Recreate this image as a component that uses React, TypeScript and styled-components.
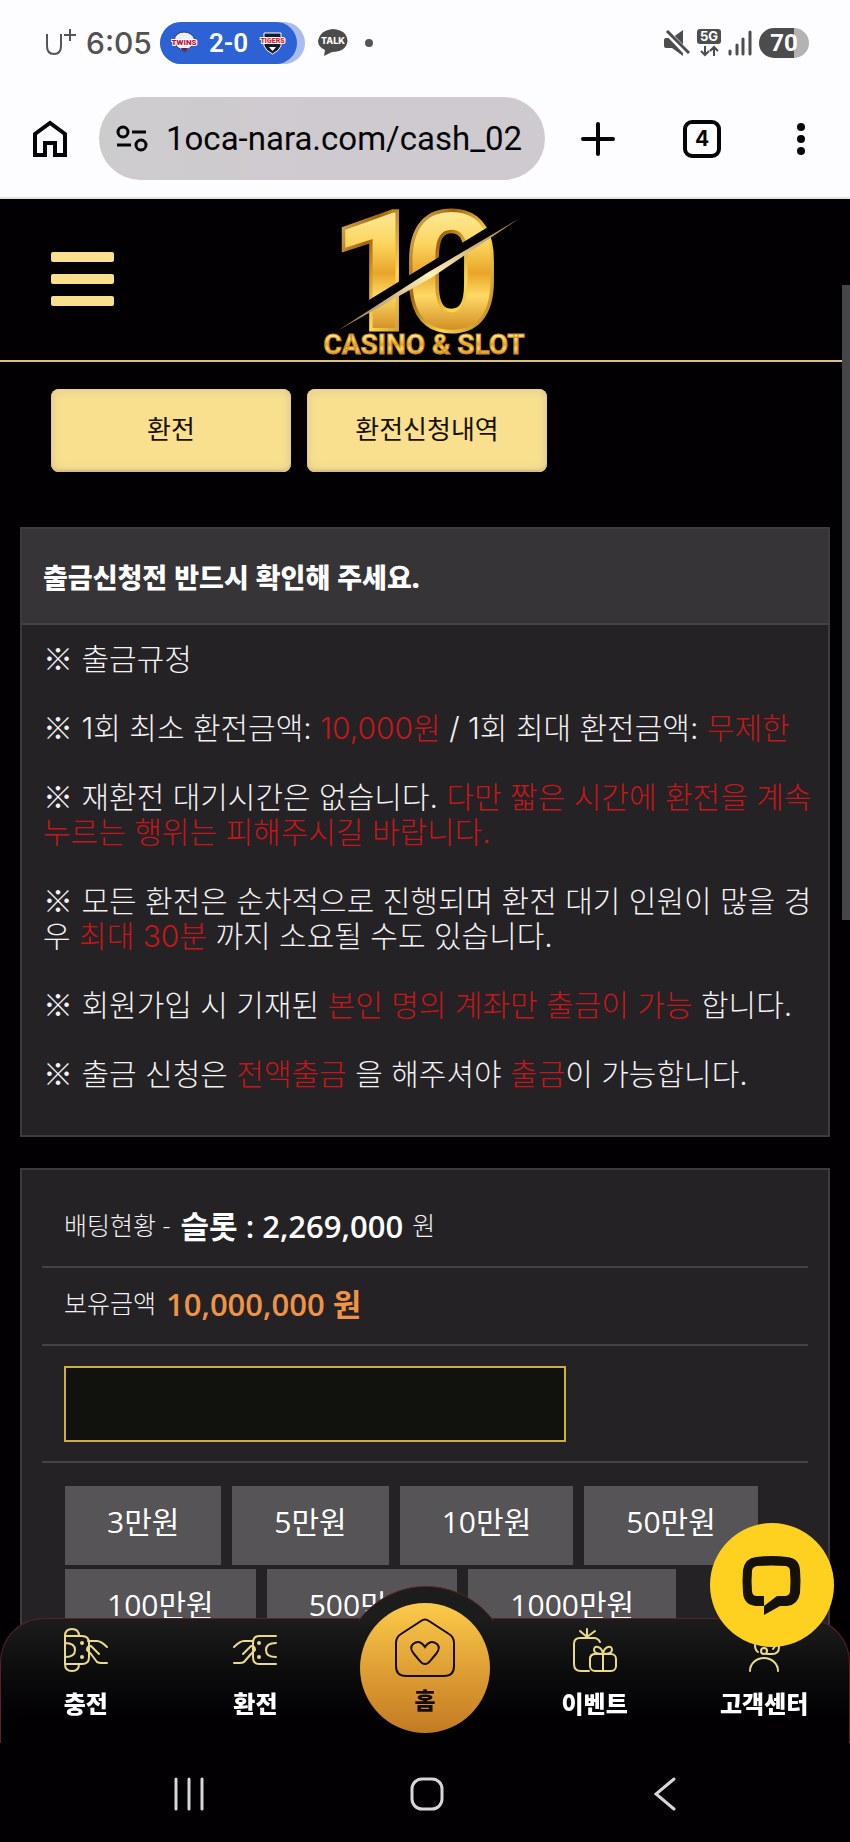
import React from "react";
import styled, { createGlobalStyle } from "styled-components";

const GlobalStyle = createGlobalStyle`
  * { box-sizing: border-box; }
  body {
    margin: 0;
    background: #020003;
    font-family: "Noto Sans CJK KR", "Noto Sans", sans-serif;
  }
  button, input { font-family: inherit; border: 0; margin: 0; padding: 0; background: none; color: inherit; }
  a { color: inherit; text-decoration: none; }
  svg { display: block; }
`;

const latin = `"Roboto", "Noto Sans", sans-serif`;

/* ---------- phone status bar ---------- */
const Page = styled.div`
  min-height: 100vh;
  overflow: hidden;
`;

const Chrome = styled.div`
  background: #fdfcff;
  border-bottom: 2px solid #e4e2e8;
  color: #050507;
`;

const StatusBar = styled.div`
  display: flex;
  align-items: center;
  height: 86px;
  padding: 0 41px 0 44px;
  color: #525252;
  font-family: "Inter", ${latin};
`;

const Carrier = styled.span`
  display: flex;
  align-items: center;
  width: 42px;
`;

const Clock = styled.span`
  width: 74px;
  font-size: 30px;
  font-weight: 500;
`;

const ScoreShadow = styled.span`
  width: 145px;
  border-radius: 21px;
  background: #a9bcf2;
`;

const ScorePill = styled.span`
  display: flex;
  align-items: center;
  justify-content: space-between;
  width: 137px;
  height: 42px;
  padding: 0 11px;
  border-radius: 21px;
  background: #2c62d4;
  color: #fff;
  font-family: ${latin};
  font-size: 26px;
  font-weight: 600;
`;

const TalkIcon = styled.svg`
  margin-left: 13px;
`;

const Dot = styled.span`
  width: 8px;
  height: 8px;
  margin-left: 17px;
  border-radius: 50%;
  background: #555;
`;

const StatusRight = styled.span`
  display: flex;
  align-items: center;
  gap: 7px;
  margin-left: auto;
`;

const Battery = styled.span`
  display: flex;
  align-items: center;
  justify-content: center;
  width: 50px;
  height: 30px;
  border-radius: 15px;
  background: linear-gradient(90deg, #4c4c4c 70%, #b3b3b3 70%);
  color: #fff;
  font-family: ${latin};
  font-size: 24px;
  font-weight: 700;
`;

/* ---------- browser tool bar ---------- */
const ToolBar = styled.div`
  display: flex;
  align-items: center;
  height: 111px;
  padding: 0 43px 6px 32px;
`;

const IconButton = styled.button`
  display: flex;
  align-items: center;
  justify-content: center;
  cursor: pointer;
`;

const AddressBox = styled.label`
  display: flex;
  flex: 1;
  align-items: center;
  gap: 18px;
  min-width: 0;
  height: 83px;
  margin: 0 36px 0 31px;
  padding-left: 17px;
  border-radius: 42px;
  background: linear-gradient(90deg, #cdcccd, #cfcad0 50%);
`;

const AddressInput = styled.input`
  flex: 1;
  width: 0;
  height: 48px;
  outline: none;
  font-family: ${latin};
  font-size: 33px;
`;

const ToolGroup = styled.div`
  display: flex;
  align-items: center;
  gap: 68px;
`;

const TabCount = styled(IconButton)`
  width: 38px;
  height: 38px;
  border: 4px solid #050507;
  border-radius: 9px;
  font-family: "Inter", ${latin};
  font-size: 21px;
  font-weight: 700;
`;

const MenuDots = styled(IconButton)`
  width: 12px;
  margin-left: 6px;
`;

/* ---------- site header ---------- */
const Header = styled.header`
  display: grid;
  grid-template-columns: 1fr auto 1fr;
  align-items: start;
  height: 163px;
  padding: 0 51px;
  border-bottom: 2px solid #dcc07c;
`;

const Burger = styled.button`
  display: flex;
  flex-direction: column;
  gap: 12px;
  width: 63px;
  margin-top: 53px;
  cursor: pointer;
`;

const BurgerLine = styled.span`
  width: 100%;
  height: 10px;
  border-radius: 2px;
  background: #f8e08d;
`;

const LogoArt = styled.svg`
  overflow: visible;
`;

const Tabs = styled.nav`
  display: flex;
  gap: 16px;
  padding: 27px 51px 55px;
`;

const TabButton = styled.button`
  width: 240px;
  height: 83px;
  padding-bottom: 6px;
  border-radius: 8px;
  background: #f8e08f;
  box-shadow: inset 0 0 8px 2px #e3cb93, inset 0 -2px 2px #b9a56c;
  color: #1a1008;
  font-size: 26px;
  cursor: pointer;
`;

/* ---------- cards ---------- */
const Card = styled.section`
  margin: 0 20px 31px;
  border: 2px solid #3d3b3d;
  background: #242224;
  color: #f4f2f4;
  font-family: "Open Sans", "Noto Sans CJK KR", sans-serif;
`;

const CardTitle = styled.h2`
  margin: 0;
  padding: 31px 21px 27px;
  border-bottom: 2px solid #444244;
  background: #363436;
  color: #fff;
  font-size: 27px;
  font-weight: 900;
  line-height: 36px;
`;

const Rules = styled.div`
  display: flex;
  flex-direction: column;
  gap: 34px;
  padding: 17px 0 43px 21px;
  font-family: "Inter", "Noto Sans CJK KR", sans-serif;
  font-size: 30px;
  font-weight: 300;
  line-height: 35px;
  white-space: nowrap;
`;

const RuleText = styled.p`
  margin: 0;
`;

const RuleMark = styled.span`
  font-family: "Noto Sans CJK KR", sans-serif;
  line-height: 1;
`;

const Red = styled.span`
  color: #c4171b;
`;

const FormCard = styled(Card)`
  padding: 20px 20px 180px;
`;

const Row = styled.div<{ $height: number }>`
  display: flex;
  align-items: center;
  height: ${(p) => p.$height}px;
  padding: 0 22px;
  border-bottom: 2px solid #444244;
`;

const TextRow = styled(Row)`
  padding-bottom: 8px;
`;

const Label = styled.span`
  font-size: 25px;
  font-weight: 300;
  white-space: pre;
`;

const Amount = styled.span<{ $accent?: boolean }>`
  margin: 0 9px 0 10px;
  color: ${(p) => (p.$accent ? "#ef9447" : "#fff")};
  font-size: 31px;
  font-weight: 600;
`;

const AmountInput = styled.input`
  width: 502px;
  height: 76px;
  padding: 0 16px;
  border: 2px solid #cdb13c;
  background: #11120d;
  color: #fff;
  font-size: 30px;
  outline: none;
`;

const Chips = styled.div`
  display: flex;
  flex-wrap: wrap;
  gap: 4px 11px;
  padding: 23px 23px 0;
`;

const Chip = styled.button`
  height: 79px;
  padding: 0 42px 12px;
  background: #565456;
  color: #fff;
  font-size: 30px;
  cursor: pointer;
`;

/* ---------- layers over the page ---------- */
const ScrollThumb = styled.div`
  position: fixed;
  top: 285px;
  right: 0;
  width: 8px;
  height: 635px;
  background: #464548;
`;

const BottomStack = styled.div`
  position: fixed;
  right: 0;
  bottom: 0;
  left: 0;
`;

const NavBar = styled.nav`
  position: relative;
  display: grid;
  grid-template-columns: repeat(5, 1fr);
  height: 125px;
  border: 1px solid #5a2226;
  border-bottom: 0;
  border-radius: 44px 44px 0 0;
  background: linear-gradient(#1c1c1c, #0b0b0c 45%, #020003 80%);
  color: #fff;
`;

const Bump = styled.div`
  position: absolute;
  top: -33px;
  left: 50%;
  width: 166px;
  height: 35px;
  margin-left: -83px;
  overflow: hidden;

  &::before {
    content: "";
    display: block;
    width: 166px;
    height: 166px;
    border: 1px solid #5a2226;
    border-radius: 50%;
    background: #1c1c1c;
  }
`;

const NavItem = styled.a`
  display: flex;
  flex-direction: column;
  align-items: center;
  gap: 13px;
  padding-top: 9px;
  font-size: 24px;
  font-weight: 900;
  line-height: 36px;
`;

const HomeItem = styled.a`
  position: relative;
  display: flex;
  flex-direction: column;
  align-items: center;
  gap: 5px;
  justify-self: center;
  width: 130px;
  height: 130px;
  margin-top: -16px;
  padding-top: 15px;
  border-radius: 50%;
  background: linear-gradient(#fccb4a, #dc9c33 55%, #c37a22);
  color: #150c04;
  font-size: 23px;
  font-weight: 900;
  line-height: 32px;
`;

const SystemBar = styled.div`
  display: grid;
  grid-template-columns: repeat(3, 1fr);
  align-items: center;
  justify-items: center;
  height: 99px;
  padding: 2px 66px 0 70px;
  background: #020003;
`;

const ChatButton = styled.button`
  position: fixed;
  right: 16px;
  bottom: 195px;
  display: flex;
  align-items: center;
  justify-content: center;
  width: 124px;
  height: 124px;
  border-radius: 50%;
  background: #fed120;
  cursor: pointer;
`;

/* ---------- drawings ---------- */
const CarrierMark = () => (
  <svg width="34" height="30" viewBox="0 0 34 30" fill="none" stroke="#555" strokeWidth="2">
    <path d="M3 6v12q0 8 7 8t7-8V6" />
    <path d="M26 1v12M20 7h12" />
  </svg>
);

const TwinsMark = () => (
  <svg width="27" height="24" viewBox="0 0 27 24">
    <path d="M3 9Q5 1 13 1t11 8l-3 6-7 6-8-5z" fill="#eef0f8" stroke="#26376e" />
    <path d="M10 17l4 4 3-4" fill="#26376e" stroke="#c3153f" />
    <text x="13" y="14" textAnchor="middle" fontFamily="Roboto, sans-serif" fontSize="8" fontWeight="900" fill="#c3153f" stroke="#fff" strokeWidth="2" paintOrder="stroke">TWINS</text>
  </svg>
);

const TigersMark = () => (
  <svg width="27" height="24" viewBox="0 0 27 24">
    <path d="M5 2h17v13q-2 5-8.500 8Q7 20 5 15z" fill="#141c30" stroke="#fff" />
    <path d="M10 16h7l-3.500 4z" fill="#fff" />
    <text x="13.500" y="12" textAnchor="middle" fontFamily="Roboto, sans-serif" fontSize="7" fontWeight="900" fill="#d8202c" stroke="#fff" strokeWidth="2" paintOrder="stroke">TIGERS</text>
  </svg>
);

const MuteIcon = () => (
  <svg width="26" height="26" viewBox="0 0 26 26" fill="#4d4d4d">
    <path d="M2 8h6l11-8v26L8 18H2Q0 18 0 16v-6q0-2 2-2z" />
    <path d="M1 0l25 26" stroke="#fdfcff" strokeWidth="6" />
    <path d="M3 1l22 22" stroke="#4d4d4d" strokeWidth="3" />
  </svg>
);

const NetworkIcon = () => (
  <svg width="24" height="28" viewBox="0 0 24 28">
    <rect width="24" height="15" rx="3" fill="#4d4d4d" />
    <text x="12" y="12" textAnchor="middle" fontFamily="Inter, sans-serif" fontSize="13" fontWeight="700" fill="#fff">5G</text>
    <path d="M8 17v9M4 22l4 4 4-4M17 27v-9M13 22l4-4 4 4" fill="none" stroke="#4d4d4d" strokeWidth="2" />
  </svg>
);

const SignalIcon = () => (
  <svg width="24" height="26" viewBox="0 0 24 26" stroke="#4d4d4d" strokeWidth="3" strokeLinecap="round">
    <path d="M2 21v3M9 15v9M15 9v15M22 2v22" />
  </svg>
);

const GoldLogo = () => (
  <LogoArt width="204" height="160" viewBox="0 0 204 160" role="img" aria-label="10 CASINO & SLOT">
    <defs>
      <linearGradient id="face" x1="0" y1="0" x2="0" y2="1">
        <stop offset="0.1" stopColor="#fff3b4" />
        <stop offset="0.35" stopColor="#fbd45c" />
        <stop offset="0.5" stopColor="#e9a52a" />
        <stop offset="0.62" stopColor="#ffd965" />
        <stop offset="0.85" stopColor="#c67a12" />
      </linearGradient>
      <linearGradient id="edge" x1="0" y1="0" x2="1" y2="1">
        <stop offset="0" stopColor="#ffe68c" />
        <stop offset="0.35" stopColor="#a3640c" />
        <stop offset="0.6" stopColor="#ffd84c" />
        <stop offset="1" stopColor="#8a4f08" />
      </linearGradient>
      <linearGradient id="blade" x1="0" y1="1" x2="1" y2="0">
        <stop offset="0" stopColor="#8f6a42" />
        <stop offset="0.5" stopColor="#fff2b8" />
        <stop offset="1" stopColor="#9c7a44" />
      </linearGradient>
    </defs>
    <g fontFamily="Roboto, sans-serif" fontWeight="700" fontSize="162" fill="url(#face)" stroke="url(#edge)" strokeWidth="7" paintOrder="stroke">
      <text x="9" y="129">1</text>
      <text x="82" y="129">0</text>
    </g>
    <path d="M10 135L197 19 188 14 10 123z" fill="#020003" />
    <path d="M14 132L104 74 197 19 108 79z" fill="url(#blade)" />
    <text x="101" y="155" textAnchor="middle" fontFamily="Roboto, sans-serif" fontWeight="700" fontSize="28" fill="url(#face)" stroke="#c98a1c" strokeWidth="1">CASINO &amp; SLOT</text>
  </LogoArt>
);

const gold = { fill: "none", stroke: "#eadb8c", strokeWidth: 2, strokeLinecap: "round", strokeLinejoin: "round" } as const;

const DepositIcon = () => (
  <svg width="44" height="44" viewBox="0 0 44 44" {...gold}>
    <path d="M1 8v28M1 8q0-7 7-7t7 7M1 36q0 7 7 7t7-7M1 8h17q7 0 7 7v14q0 7-7 7H1" />
    <path d="M1 15q10 0 10 7t-10 7" />
    <circle cx="18" cy="15" r="1" /><circle cx="18" cy="29" r="1" />
    <path d="M24 13h9q4 0 10 6M35 26l-8-8q-4 0-4 4l4 4 6 8q2 1 4 1h6" />
  </svg>
);

const WithdrawIcon = () => (
  <svg width="44" height="44" viewBox="0 0 44 44" {...gold}>
    <path d="M43 8H26q-6 0-6 7v14q0 7 6 7h17M43 15q-10 0-10 7t10 7" />
    <circle cx="26" cy="15" r="1" /><circle cx="26" cy="29" r="1" />
    <path d="M20 13h-9q-4 0-10 6M10 26l8-8q4 0 4 4l-4 4-7 8q-2 1-4 1H1" />
  </svg>
);

const EventIcon = () => (
  <svg width="44" height="44" viewBox="0 0 44 44" {...gold}>
    <path d="M16 43H8q-7 0-7-7V16q0-6 6-6h14q4 0 6 4M14 9V1M14 9L7 3M14 9l8-6" />
    <rect x="17" y="26" width="26" height="17" rx="5" />
    <path d="M30 26v17M17 34v-3q0-5 5-5M30 26q-9 0-9-4 0-4 4-3 4 1 5 7 1-6 5-7 4-1 4 3 0 4-9 4" />
  </svg>
);

const SupportIcon = () => (
  <svg width="44" height="44" viewBox="0 0 44 44" {...gold}>
    <path d="M8 43a14 13 0 0 1 28 0M13 17q0 5 3 7M10 13Q10 2 22 2t15 11v6q0 7-7 7h-5M34 17l-3 4" />
    <circle cx="22" cy="23" r="3" />
  </svg>
);

const HomeIcon = () => (
  <svg width="60" height="60" viewBox="0 0 60 60" fill="none" stroke="#150c04" strokeWidth="2">
    <path d="M26 3q4-3 8 0l20 13q5 3 5 9v23q0 10-10 10H11Q1 58 1 48V25q0-6 5-9z" />
    <path d="M30 46q-3 0-5-3l-6-7q-5-6-1-10 7-5 12 3 5-8 12-3 4 4-1 10l-6 7q-2 3-5 3z" />
  </svg>
);

const Rule = ({ children }: { children: React.ReactNode }) => (
  <RuleText><RuleMark>※</RuleMark> {children}</RuleText>
);

const chips = ["3만원", "5만원", "10만원", "50만원", "100만원", "500만원", "1000만원"];

export default function App() {
  return (
    <Page>
      <GlobalStyle />
      <Chrome>
        <StatusBar>
          <Carrier><CarrierMark /></Carrier>
          <Clock>6:05</Clock>
          <ScoreShadow>
            <ScorePill><TwinsMark />2-0<TigersMark /></ScorePill>
          </ScoreShadow>
          <TalkIcon width="30" height="28" viewBox="0 0 30 28">
            <path d="M15 0q14 1 14.500 12Q28 23 14 23l-8 4 1-6Q0 18 0 12 2 1 15 0z" fill="#4d4a4a" />
            <text x="15" y="15" textAnchor="middle" fontFamily="Inter, sans-serif" fontSize="9" fontWeight="800" fill="#fff">TALK</text>
          </TalkIcon>
          <Dot />
          <StatusRight>
            <MuteIcon />
            <NetworkIcon />
            <SignalIcon />
            <Battery>70</Battery>
          </StatusRight>
        </StatusBar>
        <ToolBar>
          <IconButton aria-label="Home">
            <svg width="36" height="38" viewBox="0 0 36 38" fill="none" stroke="#050507" strokeWidth="4">
              <path d="M3 35V14L18 3l15 11v21H23V23H13v12z" />
            </svg>
          </IconButton>
          <AddressBox>
            <svg width="32" height="28" viewBox="0 0 32 28" fill="none" stroke="#050507" strokeWidth="3">
              <circle cx="7" cy="7" r="5" /><circle cx="25" cy="20" r="5" />
              <path d="M16 7h14M1 20h14" />
            </svg>
            <AddressInput aria-label="Address" defaultValue="1oca-nara.com/cash_02" />
          </AddressBox>
          <ToolGroup>
            <IconButton aria-label="New tab">
              <svg width="34" height="34" viewBox="0 0 34 34" stroke="#050507" strokeWidth="4" strokeLinecap="round">
                <path d="M17 2v30M2 17h30" />
              </svg>
            </IconButton>
            <TabCount aria-label="Open tabs">4</TabCount>
            <MenuDots aria-label="Menu">
              <svg width="10" height="34" viewBox="0 0 10 34" fill="#050507">
                <circle cx="5" cy="5" r="4" /><circle cx="5" cy="17" r="4" /><circle cx="5" cy="29" r="4" />
              </svg>
            </MenuDots>
          </ToolGroup>
        </ToolBar>
      </Chrome>

      <Header>
        <Burger aria-label="메뉴"><BurgerLine /><BurgerLine /><BurgerLine /></Burger>
        <a href="#home"><GoldLogo /></a>
      </Header>

      <Tabs>
        <TabButton>환전</TabButton>
        <TabButton>환전신청내역</TabButton>
      </Tabs>

      <Card>
        <CardTitle>출금신청전 반드시 확인해 주세요.</CardTitle>
        <Rules>
          <Rule>출금규정</Rule>
          <Rule>1회 최소 환전금액: <Red>10,000원</Red> / 1회 최대 환전금액: <Red>무제한</Red></Rule>
          <Rule>재환전 대기시간은 없습니다. <Red>다만 짧은 시간에 환전을 계속<br />누르는 행위는 피해주시길 바랍니다.</Red></Rule>
          <Rule>모든 환전은 순차적으로 진행되며 환전 대기 인원이 많을 경<br />우 <Red>최대 30분</Red> 까지 소요될 수도 있습니다.</Rule>
          <Rule>회원가입 시 기재된 <Red>본인 명의 계좌만 출금이 가능</Red> 합니다.</Rule>
          <Rule>출금 신청은 <Red>전액출금</Red> 을 해주셔야 <Red>출금</Red>이 가능합니다.</Rule>
        </Rules>
      </Card>

      <FormCard>
        <TextRow $height={78}>
          <Label>배팅현황 -</Label><Amount>슬롯 : 2,269,000</Amount><Label>원</Label>
        </TextRow>
        <TextRow $height={78}>
          <Label>보유금액</Label><Amount $accent>10,000,000 원</Amount>
        </TextRow>
        <Row $height={117}>
          <AmountInput aria-label="환전금액" inputMode="numeric" />
        </Row>
        <Chips>
          {chips.map((c) => <Chip key={c}>{c}</Chip>)}
        </Chips>
      </FormCard>

      <ScrollThumb />

      <BottomStack>
        <NavBar>
          <Bump />
          <NavItem href="#deposit"><DepositIcon />충전</NavItem>
          <NavItem href="#withdraw"><WithdrawIcon />환전</NavItem>
          <HomeItem href="#home"><HomeIcon />홈</HomeItem>
          <NavItem href="#event"><EventIcon />이벤트</NavItem>
          <NavItem href="#support"><SupportIcon />고객센터</NavItem>
        </NavBar>
        <SystemBar>
          <IconButton aria-label="최근 앱">
            <svg width="32" height="34" viewBox="0 0 32 34" stroke="#d9d6da" strokeWidth="3" strokeLinecap="round">
              <path d="M3 2v30M16 2v30M29 2v30" />
            </svg>
          </IconButton>
          <IconButton aria-label="홈 화면">
            <svg width="34" height="34" viewBox="0 0 34 34" fill="none" stroke="#d9d6da" strokeWidth="3">
              <rect x="2" y="2" width="30" height="30" rx="10" />
            </svg>
          </IconButton>
          <IconButton aria-label="뒤로">
            <svg width="22" height="34" viewBox="0 0 22 34" fill="none" stroke="#d9d6da" strokeWidth="3" strokeLinecap="round">
              <path d="M20 2L2 17l18 15" />
            </svg>
          </IconButton>
        </SystemBar>
      </BottomStack>

      <ChatButton aria-label="채팅 상담">
        <svg width="60" height="62" viewBox="0 0 60 62" fill="#15120c">
          <path fillRule="evenodd" d="M14 3Q30 1 45 3 57 4 58 16 59 27 58 39 56 51 45 52H38L22 61V52H14Q2 51 1 39 0 27 1 16 3 4 14 3zM15 12Q10 13 10 17 9 27 10 37 10 42 15 42H22V52L35 42H43Q47 42 48 38 49 27 48 17 48 13 44 12 30 11 15 12z" />
        </svg>
      </ChatButton>
    </Page>
  );
}
